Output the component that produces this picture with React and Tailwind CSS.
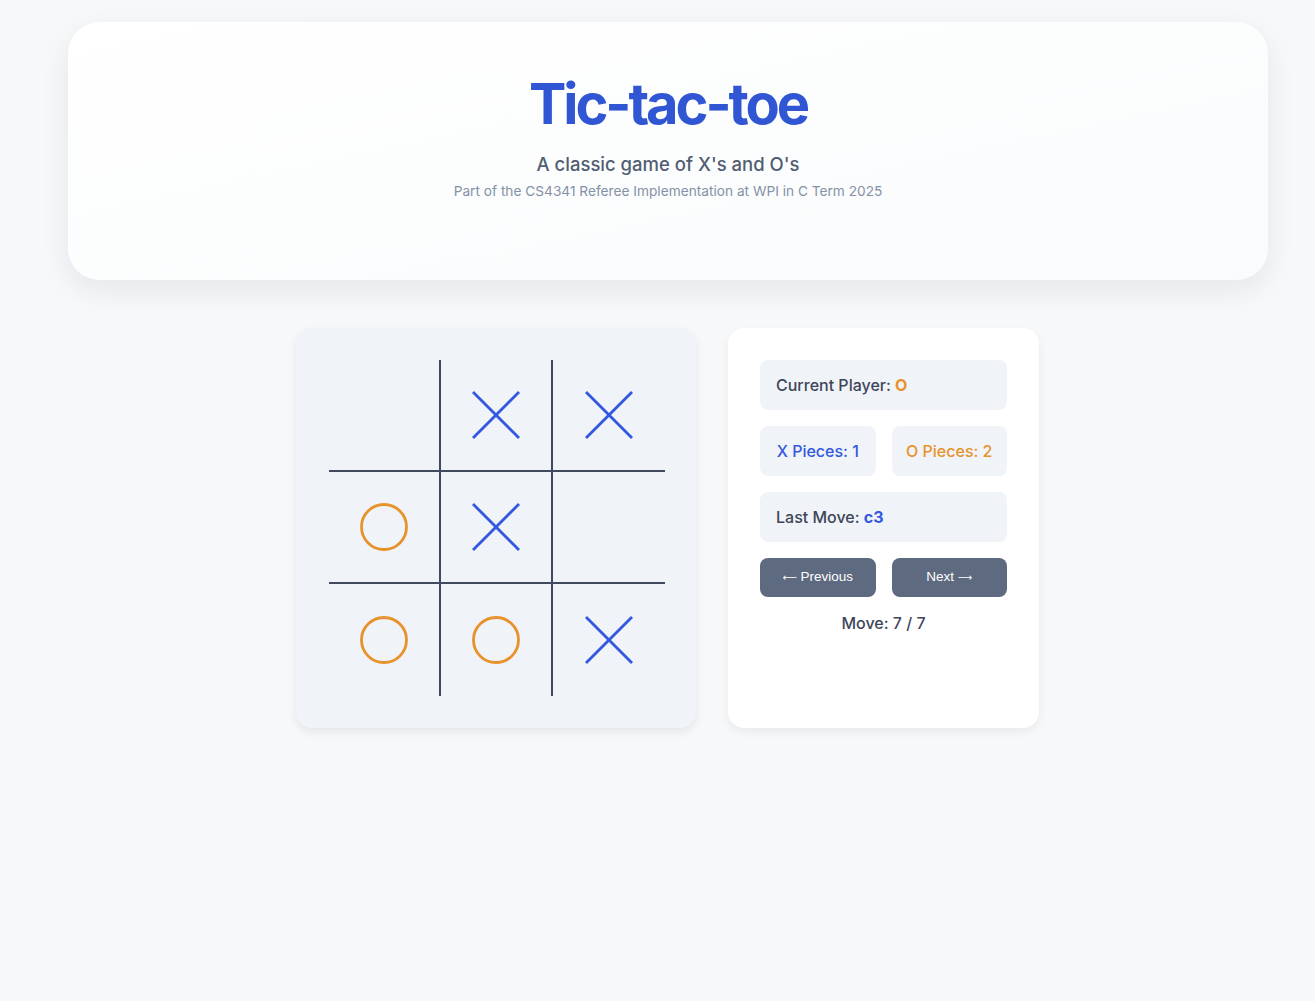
import React from "react";

const X = () => (
  <svg width="50" height="50" viewBox="0 0 50 50">
    <line x1="2" y1="2" x2="48" y2="48" stroke="#3358e0" strokeWidth="2.8" />
    <line x1="48" y1="2" x2="2" y2="48" stroke="#3358e0" strokeWidth="2.8" />
  </svg>
);

const O = () => (
  <svg width="50" height="50" viewBox="0 0 50 50">
    <circle cx="25" cy="25" r="22.5" fill="none" stroke="#e8922b" strokeWidth="2.8" />
  </svg>
);

const board = ["", "X", "X", "O", "X", "", "O", "O", "X"];

export default function App() {
  return (
    <div
      className="min-h-screen bg-[#f7f8fa] pt-[22px]"
      style={{ fontFamily: "Inter, 'Noto Sans', sans-serif" }}
    >
      <div className="ml-[68px] w-[1200px]">
        <div className="rounded-[32px] bg-gradient-to-br from-white to-[#f9fbfc] shadow-[0_10px_30px_rgba(15,23,42,0.08)] pt-[54px] pb-[79px] flex flex-col items-center">
          <h1 className="text-[56px] leading-none font-bold tracking-[-0.055em] text-[#3056d3]">
            Tic-tac-toe
          </h1>
          <p className="mt-[18px] text-[18.5px] leading-[28px] font-medium text-[#525d72]">
            A classic game of X's and O's
          </p>
          <p className="mt-[3px] text-[13.7px] leading-[20px] text-[#8592a6]">
            Part of the CS4341 Referee Implementation at WPI in C Term 2025
          </p>
        </div>

        <div className="mt-[48px] flex gap-8 pl-[228px]">
          <div className="w-[400px] h-[400px] rounded-2xl bg-[#f0f3f8] pt-8 pb-8 pl-[33px] pr-[31px] shadow-[0_4px_10px_rgba(15,23,42,0.08)]">
            <div className="grid grid-cols-3 grid-rows-3 w-[336px] h-[336px]">
              {board.map((v, i) => {
                const col = i % 3;
                const row = Math.floor(i / 3);
                return (
                  <div
                    key={i}
                    className={
                      "flex items-center justify-center border-[#414a5c] " +
                      (col < 2 ? "border-r-2 " : "") +
                      (row < 2 ? "border-b-2 " : "")
                    }
                  >
                    {v === "X" ? <X /> : v === "O" ? <O /> : null}
                  </div>
                );
              })}
            </div>
          </div>

          <div className="w-[311px] h-[400px] rounded-2xl bg-white p-8 shadow-[0_4px_10px_rgba(15,23,42,0.06)] flex flex-col gap-4">
            <div className="h-[50px] rounded-lg bg-[#f0f3f8] px-4 flex items-center text-[16px] font-medium text-[#3d4659]">
              Current Player:&nbsp;<span className="font-bold text-[#e8922b]">O</span>
            </div>
            <div className="grid grid-cols-2 gap-4">
              <div className="h-[50px] rounded-lg bg-[#f0f3f8] flex items-center justify-center text-[16px] font-medium text-[#3358e0]">
                X Pieces: 1
              </div>
              <div className="h-[50px] rounded-lg bg-[#f0f3f8] flex items-center justify-center text-[16px] font-medium text-[#e8922b]">
                O Pieces: 2
              </div>
            </div>
            <div className="h-[50px] rounded-lg bg-[#f0f3f8] px-4 flex items-center text-[16px] font-medium text-[#3d4659]">
              Last Move:&nbsp;<span className="font-bold text-[#3358e0]">c3</span>
            </div>
            <div className="grid grid-cols-2 gap-4">
              <button className="h-[39px] rounded-lg bg-[#5e6a80] text-white text-[13.5px] font-medium font-['Liberation_Sans',Arial,sans-serif]">
                <span className="text-[10px] font-['DejaVu_Sans',sans-serif]">⟵</span> Previous
              </button>
              <button className="h-[39px] rounded-lg bg-[#5e6a80] text-white text-[13.5px] font-medium font-['Liberation_Sans',Arial,sans-serif]">
                Next <span className="text-[10px] font-['DejaVu_Sans',sans-serif]">⟶</span>
              </button>
            </div>
            <div className="mt-[-2px] text-center text-[16px] leading-6 font-medium text-[#3d4659]">
              Move: 7 / 7
            </div>
          </div>
        </div>
      </div>
    </div>
  );
}
